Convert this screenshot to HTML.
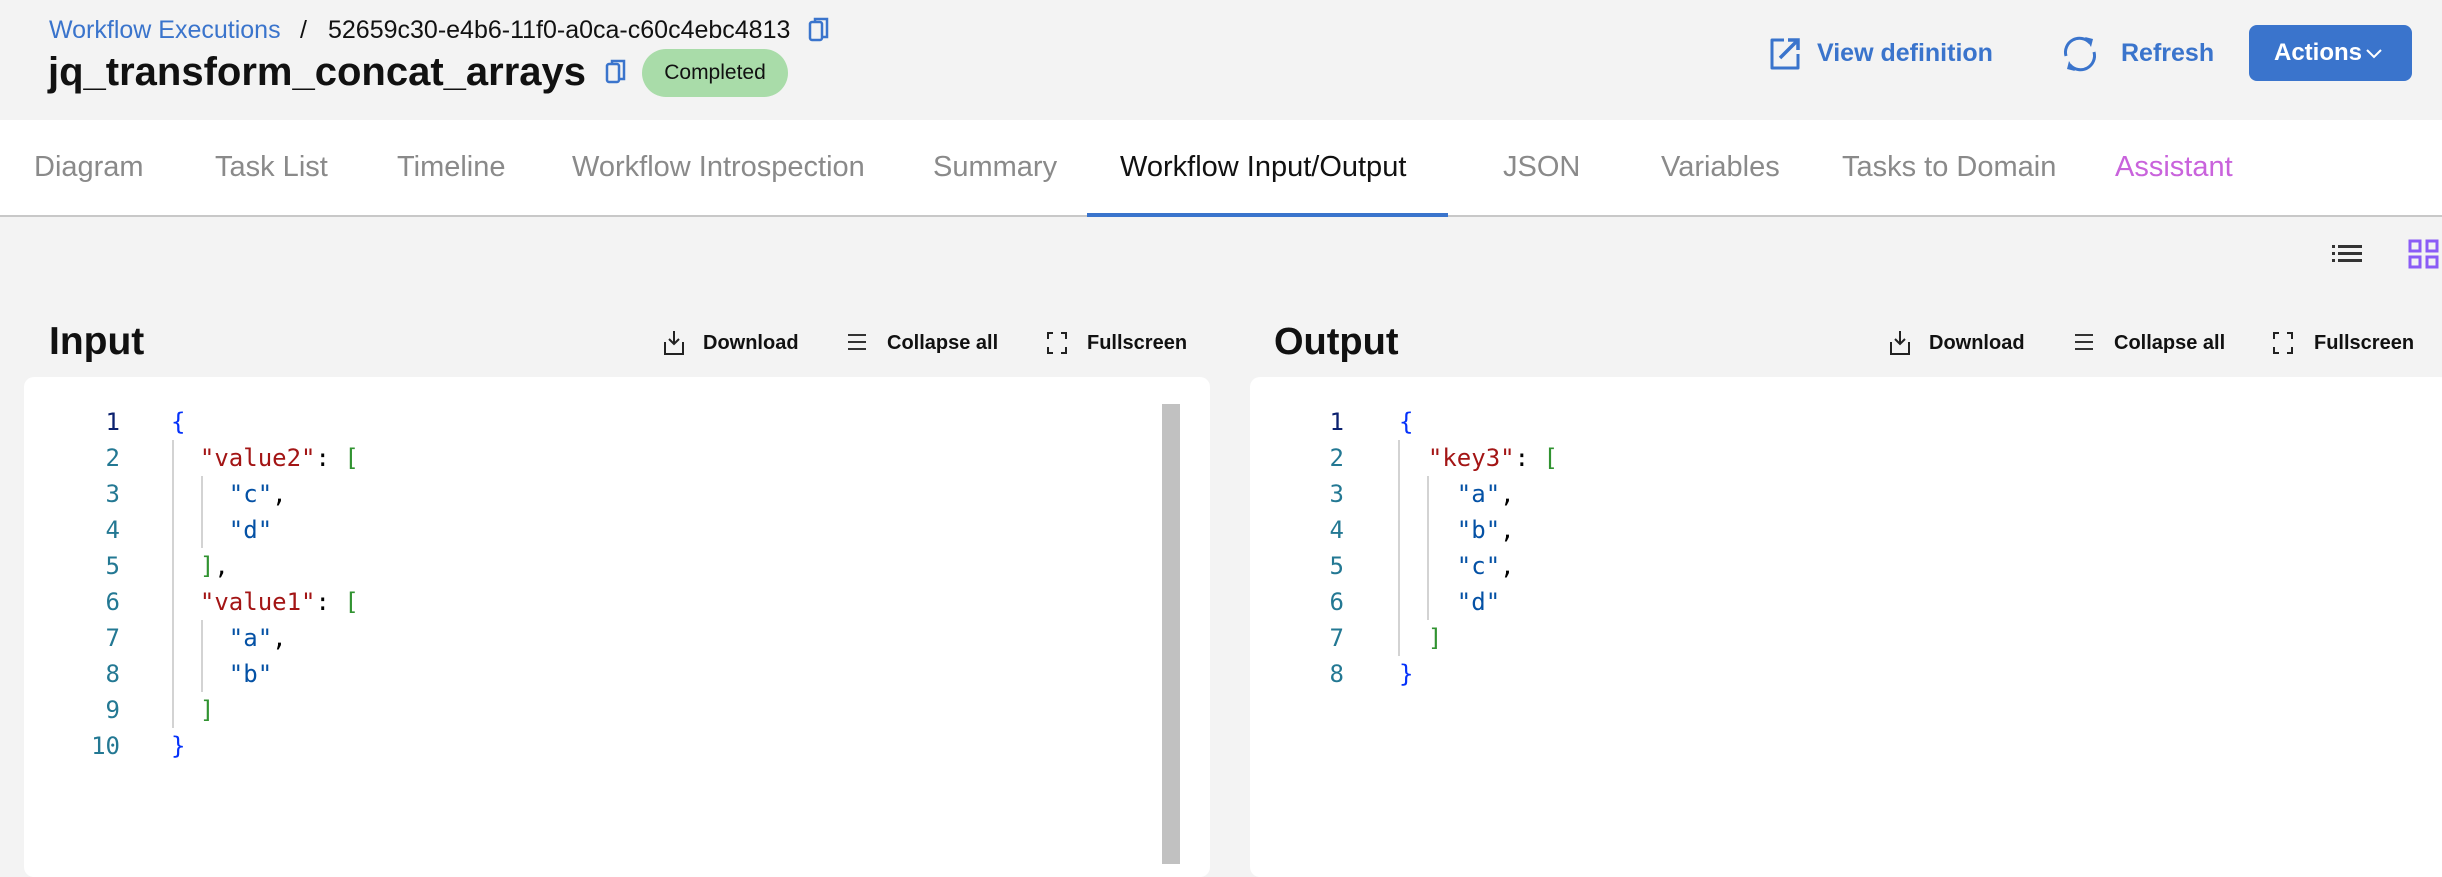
<!DOCTYPE html>
<html><head><meta charset="utf-8"><style>
*{margin:0;padding:0;box-sizing:border-box}
body{width:2442px;height:858px;overflow:hidden;background:#f3f3f3;font-family:"Liberation Sans",sans-serif;position:relative}
.a{position:absolute;white-space:nowrap}
.tabs{position:absolute;left:0;top:120px;width:2442px;height:97px;background:#fff;border-bottom:2px solid #c8c8c8}
.tab{position:absolute;top:150px;font-size:29px;color:#8a8a8a;line-height:34px}
.tb{font-size:20px;font-weight:bold;color:#111;top:331px;line-height:24px}
.card{position:absolute;top:377px;height:500px;background:#fff;border-radius:10px}
.code{position:absolute;font-family:"DejaVu Sans Mono","Liberation Mono",monospace;font-size:24px;line-height:36px;white-space:pre}
.ln{text-align:right;color:#237893}
.k{color:#a31515}.s{color:#0451a5}.b{color:#0431fa}.g{color:#319331}
.guide{position:absolute;width:2px;background:#d3d3d3}
</style></head><body>
<div class="a" style="left:49px;top:15px;font-size:25px;line-height:30px;color:#3a74cc">Workflow Executions</div>
<div class="a" style="left:300px;top:15px;font-size:25px;line-height:30px;color:#111">/</div>
<div class="a" style="left:328px;top:15px;font-size:25px;line-height:30px;color:#111">52659c30-e4b6-11f0-a0ca-c60c4ebc4813</div>
<svg class="a" style="left:808px;top:16px" width="22" height="28" viewBox="0 0 22 28"><rect x="2" y="6" width="12" height="18" rx="2" fill="none" stroke="#3a74cc" stroke-width="2.5"/><path d="M7 6V3h12v18h-5" fill="none" stroke="#3a74cc" stroke-width="2.5"/></svg>
<div class="a" style="left:48px;top:49px;font-size:40px;font-weight:bold;line-height:46px;color:#111">jq_transform_concat_arrays</div>
<svg class="a" style="left:605px;top:58px" width="22" height="28" viewBox="0 0 22 28"><rect x="2" y="6" width="12" height="18" rx="2" fill="none" stroke="#3a74cc" stroke-width="2.5"/><path d="M7 6V3h12v18h-5" fill="none" stroke="#3a74cc" stroke-width="2.5"/></svg>
<div class="a" style="left:642px;top:49px;width:146px;height:48px;border-radius:24px;background:#a9dca9;font-size:21px;line-height:48px;text-align:center;color:#111">Completed</div>

<svg class="a" style="left:1768px;top:36px" width="34" height="34" viewBox="0 0 34 34"><path d="M16 4H4v28h26V18" fill="none" stroke="#3a74cc" stroke-width="3" stroke-linejoin="round"/><path d="M12 22L30 4M20 4h10v10" fill="none" stroke="#3a74cc" stroke-width="3.5"/></svg>
<div class="a" style="left:1817px;top:38px;font-size:25px;font-weight:bold;line-height:30px;color:#3a74cc">View definition</div>
<svg class="a" style="left:2060px;top:34px" width="40" height="40" viewBox="0 0 40 40"><path d="M6 22A14 14 0 0 1 30 9" fill="none" stroke="#3a74cc" stroke-width="3"/><path d="M34 18A14 14 0 0 1 10 31" fill="none" stroke="#3a74cc" stroke-width="3"/><path d="M25 3l8 2-2 8z M15 37l-8-2 2-8z" fill="#3a74cc"/></svg>
<div class="a" style="left:2121px;top:38px;font-size:25px;font-weight:bold;line-height:30px;color:#3a74cc">Refresh</div>
<div class="a" style="left:2249px;top:25px;width:163px;height:56px;border-radius:8px;background:#3a74cc;color:#fff;font-size:24px;font-weight:bold;line-height:56px;padding-left:25px">Actions<svg style="position:absolute;left:116px;top:23px" width="18" height="12" viewBox="0 0 18 12"><path d="M2 2l7 7 7-7" fill="none" stroke="#fff" stroke-width="2"/></svg></div>

<div class="tabs"></div>
<div class="tab" style="left:34px">Diagram</div>
<div class="tab" style="left:215px">Task List</div>
<div class="tab" style="left:397px">Timeline</div>
<div class="tab" style="left:572px">Workflow Introspection</div>
<div class="tab" style="left:933px">Summary</div>
<div class="tab" style="left:1120px;color:#111">Workflow Input/Output</div>
<div class="tab" style="left:1503px">JSON</div>
<div class="tab" style="left:1661px">Variables</div>
<div class="tab" style="left:1842px">Tasks to Domain</div>
<div class="tab" style="left:2115px;color:#c963dc">Assistant</div>
<div class="a" style="left:1087px;top:213px;width:361px;height:4px;background:#3a74cc"></div>

<svg class="a" style="left:2332px;top:243px" width="32" height="22" viewBox="0 0 32 22"><g fill="#333"><rect x="0" y="2" width="3" height="3"/><rect x="0" y="9" width="3" height="3"/><rect x="0" y="16" width="3" height="3"/><rect x="6" y="2" width="24" height="3"/><rect x="6" y="9" width="24" height="3"/><rect x="6" y="16" width="24" height="3"/></g></svg>
<svg class="a" style="left:2408px;top:239px" width="34" height="30" viewBox="0 0 34 30"><g fill="none" stroke="#8b5cf6" stroke-width="3"><rect x="2" y="2" width="10" height="10"/><rect x="19" y="2" width="10" height="10"/><rect x="2" y="18" width="10" height="10"/><rect x="19" y="18" width="10" height="10"/></g></svg>

<div class="a" style="left:49px;top:319px;font-size:39px;font-weight:bold;line-height:46px;color:#111">Input</div>
<div class="a" style="left:1274px;top:319px;font-size:38px;font-weight:bold;line-height:46px;color:#111">Output</div>

<svg class="a" style="left:661px;top:330px" width="26" height="26" viewBox="0 0 26 26"><path d="M13 1v13M8 9l5 5 5-5M4 12v12h18V12" fill="none" stroke="#222" stroke-width="2"/></svg>
<div class="a tb" style="left:703px">Download</div>
<svg class="a" style="left:847px;top:332px" width="20" height="20" viewBox="0 0 20 20"><path d="M1 3h18M1 10h18M1 17h18" stroke="#333" stroke-width="2"/></svg>
<div class="a tb" style="left:887px">Collapse all</div>
<svg class="a" style="left:1047px;top:332px" width="20" height="22" viewBox="0 0 20 22"><path d="M1 7V1h5M14 1h5v6M19 15v6h-5M6 21H1v-6" fill="none" stroke="#222" stroke-width="2"/></svg>
<div class="a tb" style="left:1087px">Fullscreen</div>
<svg class="a" style="left:1887px;top:330px" width="26" height="26" viewBox="0 0 26 26"><path d="M13 1v13M8 9l5 5 5-5M4 12v12h18V12" fill="none" stroke="#222" stroke-width="2"/></svg>
<div class="a tb" style="left:1929px">Download</div>
<svg class="a" style="left:2074px;top:332px" width="20" height="20" viewBox="0 0 20 20"><path d="M1 3h18M1 10h18M1 17h18" stroke="#333" stroke-width="2"/></svg>
<div class="a tb" style="left:2114px">Collapse all</div>
<svg class="a" style="left:2273px;top:332px" width="20" height="22" viewBox="0 0 20 22"><path d="M1 7V1h5M14 1h5v6M19 15v6h-5M6 21H1v-6" fill="none" stroke="#222" stroke-width="2"/></svg>
<div class="a tb" style="left:2314px">Fullscreen</div>

<div class="card" style="left:24px;width:1186px"></div>
<div class="card" style="left:1250px;width:1200px"></div>
<div class="a" style="left:1162px;top:404px;width:18px;height:460px;background:#c1c1c1"></div>

<div class="code ln" style="left:60px;top:404px;width:60px"><span style="color:#0b216f">1</span>
2
3
4
5
6
7
8
9
10</div>
<div class="guide" style="left:172px;top:440px;height:288px"></div>
<div class="guide" style="left:201px;top:476px;height:72px"></div>
<div class="guide" style="left:201px;top:620px;height:72px"></div>
<div class="code" style="left:171px;top:404px"><span class="b">{</span>
  <span class="k">"value2"</span>: <span class="g">[</span>
    <span class="s">"c"</span>,
    <span class="s">"d"</span>
  <span class="g">]</span>,
  <span class="k">"value1"</span>: <span class="g">[</span>
    <span class="s">"a"</span>,
    <span class="s">"b"</span>
  <span class="g">]</span>
<span class="b">}</span></div>

<div class="code ln" style="left:1284px;top:404px;width:60px"><span style="color:#0b216f">1</span>
2
3
4
5
6
7
8</div>
<div class="guide" style="left:1398px;top:440px;height:216px"></div>
<div class="guide" style="left:1427px;top:476px;height:144px"></div>
<div class="code" style="left:1399px;top:404px"><span class="b">{</span>
  <span class="k">"key3"</span>: <span class="g">[</span>
    <span class="s">"a"</span>,
    <span class="s">"b"</span>,
    <span class="s">"c"</span>,
    <span class="s">"d"</span>
  <span class="g">]</span>
<span class="b">}</span></div>
</body></html>
